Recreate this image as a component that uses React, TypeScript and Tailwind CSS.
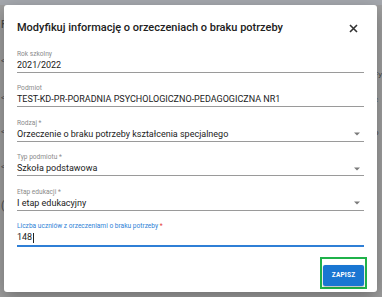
import React from "react";

type Field = {
  label: string;
  value: string;
  required?: boolean;
  select?: boolean;
  focused?: boolean;
};

const fields: Field[] = [
  { label: "Rok szkolny", value: "2021/2022" },
  { label: "Podmiot", value: "TEST-KD-PR-PORADNIA PSYCHOLOGICZNO-PEDAGOGICZNA NR1" },
  { label: "Rodzaj", value: "Orzeczenie o braku potrzeby kształcenia specjalnego", required: true, select: true },
  { label: "Typ podmiotu", value: "Szkoła podstawowa", required: true, select: true },
  { label: "Etap edukacji", value: "I etap edukacyjny", required: true, select: true },
  { label: "Liczba uczniów z orzeczeniami o braku potrzeby", value: "148", required: true, focused: true },
];

function FormField({ f }: { f: Field }) {
  return (
    <div className="flex flex-col">
      <div
        className={
          "h-[10px] text-[6.6px] leading-[10px] " +
          (f.focused ? "text-[#2f7fd6]" : "text-[#8a8a8a]")
        }
      >
        {f.label}
        {f.required && (
          <span className={f.focused ? "text-[#e53935]" : ""}> *</span>
        )}
      </div>
      <div
        className={
          "flex items-center justify-between pr-[4px] " +
          (f.focused ? "h-[16px] border-b-2 border-[#2f7fd6]" : "h-[14px] border-b border-[#9a9a9a]")
        }
      >
        <span className="flex items-center text-[9px] leading-[13px] text-[#222]">
          {f.value}
          {f.focused && <span className="ml-[0.5px] inline-block h-[10px] w-px bg-[#222]" />}
        </span>
        {f.select && (
          <svg width="6" height="4" viewBox="0 0 6 4">
            <path d="M0 0.5 L6 0.5 L3 3.5 Z" fill="#7a7a7a" />
          </svg>
        )}
      </div>
    </div>
  );
}

export default function App() {
  return (
    <div
      className="relative h-[297px] w-[382px] overflow-hidden bg-[#9f9f9f]"
      style={{ fontFamily: "Roboto, 'Liberation Sans', sans-serif" }}
    >
      {/* page behind the backdrop */}
      <div className="h-[5px] bg-[#a5a8ae]" />
      <div className="flex justify-between text-[10px] text-[#4a4a4a]">
        <div className="flex flex-col pl-[1px] leading-none">
          <span className="mt-[15px] font-medium">F</span>
          <span className="mt-[28px] text-[7px]">&lt;</span>
          <span className="mt-[30px] text-[7px]">&lt;</span>
          <span className="mt-[27px] text-[7px]">&lt;</span>
          <span className="mt-[28px] text-[7px]">&lt;</span>
          <span className="mt-[30px]">(</span>
        </div>
        <div className="flex flex-col text-[8px] leading-none">
          <span className="mt-[66px]">Fy</span>
          <span className="mt-[17px]">c</span>
          <span className="mt-[25px]">p</span>
        </div>
      </div>

      {/* dialog */}
      <div className="absolute left-[4px] top-[5px] flex h-[287px] w-[373px] flex-col rounded-[3px] bg-white shadow-[0_6px_18px_rgba(0,0,0,0.3)]">
        <div className="flex h-[44px] items-center justify-between pl-[13px] pr-[19px] pt-[2px]">
          <h1 className="text-[11px] font-medium text-[#212121]">
            Modyfikuj informację o orzeczeniach o braku potrzeby
          </h1>
          <svg width="9" height="9" viewBox="0 0 9 9">
            <path d="M1 1 L8 8 M8 1 L1 8" stroke="#333" strokeWidth="1.6" />
          </svg>
        </div>
        <div className="flex flex-col gap-[10.4px] px-[13px]">
          {fields.map((f) => (
            <FormField key={f.label} f={f} />
          ))}
        </div>
        <div className="mt-auto flex justify-end pb-[3px] pr-[10px]">
          <div className="border-[2.5px] border-[#1fb24a] p-[1px]">
            <button className="h-[21px] w-[41px] rounded-[2px] bg-[#1976d2] text-[6.5px] font-bold tracking-[0.2px] text-white shadow-[0_1px_2px_rgba(0,0,0,0.3)]">
              ZAPISZ
            </button>
          </div>
        </div>
      </div>
    </div>
  );
}
